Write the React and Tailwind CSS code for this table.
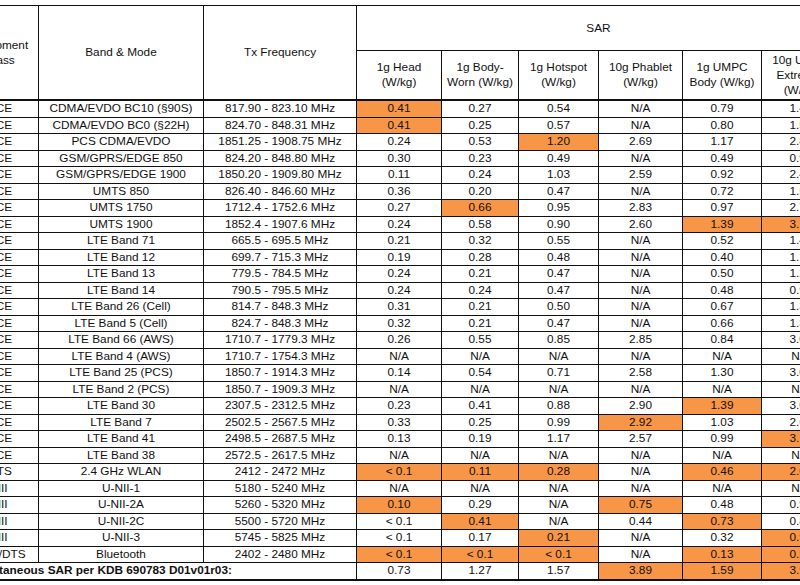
import React from "react";

const ORANGE = "bg-[#f79646]";

const rows = [
  ["PCE", "CDMA/EVDO BC10 (§90S)", "817.90 - 823.10 MHz", ["0.41", "0.27", "0.54", "N/A", "0.79", "1.48"], [0]],
  ["PCE", "CDMA/EVDO BC0 (§22H)", "824.70 - 848.31 MHz", ["0.41", "0.25", "0.57", "N/A", "0.80", "1.52"], [0]],
  ["PCE", "PCS CDMA/EVDO", "1851.25 - 1908.75 MHz", ["0.24", "0.53", "1.20", "2.69", "1.17", "2.86"], [2]],
  ["PCE", "GSM/GPRS/EDGE 850", "824.20 - 848.80 MHz", ["0.30", "0.23", "0.49", "N/A", "0.49", "0.97"], []],
  ["PCE", "GSM/GPRS/EDGE 1900", "1850.20 - 1909.80 MHz", ["0.11", "0.24", "1.03", "2.59", "0.92", "2.41"], []],
  ["PCE", "UMTS 850", "826.40 - 846.60 MHz", ["0.36", "0.20", "0.47", "N/A", "0.72", "1.56"], []],
  ["PCE", "UMTS 1750", "1712.4 - 1752.6 MHz", ["0.27", "0.66", "0.95", "2.83", "0.97", "2.74"], [1]],
  ["PCE", "UMTS 1900", "1852.4 - 1907.6 MHz", ["0.24", "0.58", "0.90", "2.60", "1.39", "3.12"], [4, 5]],
  ["PCE", "LTE Band 71", "665.5 - 695.5 MHz", ["0.21", "0.32", "0.55", "N/A", "0.52", "1.42"], []],
  ["PCE", "LTE Band 12", "699.7 - 715.3 MHz", ["0.19", "0.28", "0.48", "N/A", "0.40", "1.18"], []],
  ["PCE", "LTE Band 13", "779.5 - 784.5 MHz", ["0.24", "0.21", "0.47", "N/A", "0.50", "1.26"], []],
  ["PCE", "LTE Band 14", "790.5 - 795.5 MHz", ["0.24", "0.24", "0.47", "N/A", "0.48", "0.98"], []],
  ["PCE", "LTE Band 26 (Cell)", "814.7 - 848.3 MHz", ["0.31", "0.21", "0.50", "N/A", "0.67", "1.35"], []],
  ["PCE", "LTE Band 5 (Cell)", "824.7 - 848.3 MHz", ["0.32", "0.21", "0.47", "N/A", "0.66", "1.31"], []],
  ["PCE", "LTE Band 66 (AWS)", "1710.7 - 1779.3 MHz", ["0.26", "0.55", "0.85", "2.85", "0.84", "3.02"], []],
  ["PCE", "LTE Band 4 (AWS)", "1710.7 - 1754.3 MHz", ["N/A", "N/A", "N/A", "N/A", "N/A", "N/A"], []],
  ["PCE", "LTE Band 25 (PCS)", "1850.7 - 1914.3 MHz", ["0.14", "0.54", "0.71", "2.58", "1.30", "3.05"], []],
  ["PCE", "LTE Band 2 (PCS)", "1850.7 - 1909.3 MHz", ["N/A", "N/A", "N/A", "N/A", "N/A", "N/A"], []],
  ["PCE", "LTE Band 30", "2307.5 - 2312.5 MHz", ["0.23", "0.41", "0.88", "2.90", "1.39", "3.08"], [4]],
  ["PCE", "LTE Band 7", "2502.5 - 2567.5 MHz", ["0.33", "0.25", "0.99", "2.92", "1.03", "2.67"], [3]],
  ["PCE", "LTE Band 41", "2498.5 - 2687.5 MHz", ["0.13", "0.19", "1.17", "2.57", "0.99", "3.16"], [5]],
  ["PCE", "LTE Band 38", "2572.5 - 2617.5 MHz", ["N/A", "N/A", "N/A", "N/A", "N/A", "N/A"], []],
  ["DTS", "2.4 GHz WLAN", "2412 - 2472 MHz", ["< 0.1", "0.11", "0.28", "N/A", "0.46", "2.04"], [0, 1, 2, 4, 5]],
  ["NII", "U-NII-1", "5180 - 5240 MHz", ["N/A", "N/A", "N/A", "N/A", "N/A", "N/A"], []],
  ["NII", "U-NII-2A", "5260 - 5320 MHz", ["0.10", "0.29", "N/A", "0.75", "0.48", "0.96"], [0, 3]],
  ["NII", "U-NII-2C", "5500 - 5720 MHz", ["< 0.1", "0.41", "N/A", "0.44", "0.73", "0.82"], [1, 4]],
  ["NII", "U-NII-3", "5745 - 5825 MHz", ["< 0.1", "0.17", "0.21", "N/A", "0.32", "0.91"], [2, 5]],
  ["DSS/DTS", "Bluetooth", "2402 - 2480 MHz", ["< 0.1", "< 0.1", "< 0.1", "N/A", "0.13", "0.54"], [0, 1, 2, 4, 5]],
];

const total = { values: ["0.73", "1.27", "1.57", "3.89", "1.59", "3.97"], hi: [3, 4, 5] };

const subHeads = [
  ["1g Head", "(W/kg)"],
  ["1g Body-", "Worn (W/kg)"],
  ["1g Hotspot", "(W/kg)"],
  ["10g Phablet", "(W/kg)"],
  ["1g UMPC", "Body (W/kg)"],
  ["10g UMPC", "Extremity", "(W/kg)"],
];

const cell = "flex items-center justify-center text-center border-r border-b border-[#111] whitespace-nowrap";

export default function App() {
  return (
    <div className="w-[800px] h-[585px] overflow-hidden bg-white pt-[5px] text-[#111] text-[11.8px] leading-[15px] font-['Liberation_Sans',Arial,sans-serif]">
      <div className="ml-[-38px] w-[879px] grid grid-cols-[77px_165px_153px_85px_77px_80px_84px_79px_79px] border-t border-[#111]">
        {/* header */}
        <div className={`${cell} row-span-2 h-[95px] border-b-2 flex-col`}>
          <span>Equipment</span>
          <span>Class</span>
        </div>
        <div className={`${cell} row-span-2 h-[95px] border-b-2`}>Band &amp; Mode</div>
        <div className={`${cell} row-span-2 h-[95px] border-b-2`}>Tx Frequency</div>
        <div className={`${cell} col-span-6 h-[45px]`}>SAR</div>
        {subHeads.map((lines, i) => (
          <div key={i} className={`${cell} h-[50px] border-b-2 flex-col`}>
            {lines.map((l) => (
              <span key={l}>{l}</span>
            ))}
          </div>
        ))}

        {/* data rows */}
        {rows.map(([cls, band, freq, vals, hi]) => (
          <React.Fragment key={band}>
            <div className={`${cell} h-[16.5px]`}>{cls}</div>
            <div className={`${cell} h-[16.5px]`}>{band}</div>
            <div className={`${cell} h-[16.5px]`}>{freq}</div>
            {vals.map((v, i) => (
              <div key={i} className={`${cell} h-[16.5px] ${hi.includes(i) ? ORANGE : ""}`}>
                {v}
              </div>
            ))}
          </React.Fragment>
        ))}

        {/* total row */}
        <div className="col-span-3 h-[17.5px] flex items-center pl-[5px] border-r border-b-2 border-[#111] font-bold whitespace-nowrap">
          Simultaneous SAR per KDB 690783 D01v01r03:
        </div>
        {total.values.map((v, i) => (
          <div key={i} className={`${cell} h-[17.5px] border-b-2 ${total.hi.includes(i) ? ORANGE : ""}`}>
            {v}
          </div>
        ))}
      </div>
    </div>
  );
}
